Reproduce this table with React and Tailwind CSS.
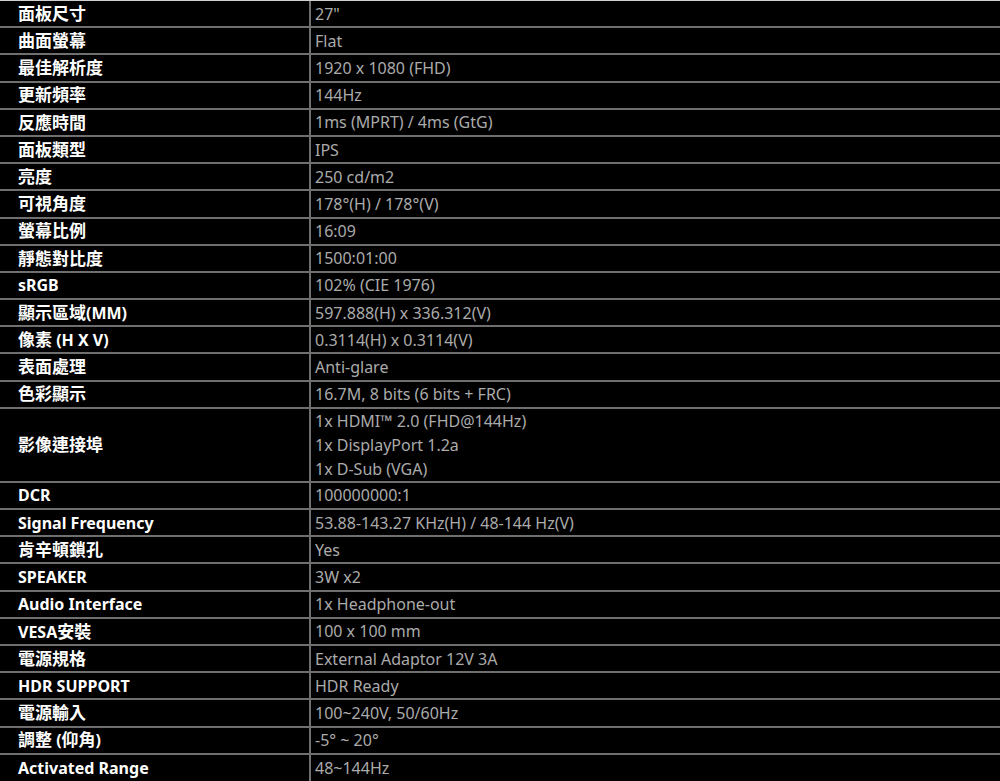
const specs = [
  ['面板尺寸', ['27"']],
  ['曲面螢幕', ['Flat']],
  ['最佳解析度', ['1920 x 1080 (FHD)']],
  ['更新頻率', ['144Hz']],
  ['反應時間', ['1ms (MPRT) / 4ms (GtG)']],
  ['面板類型', ['IPS']],
  ['亮度', ['250 cd/m2']],
  ['可視角度', ['178°(H) / 178°(V)']],
  ['螢幕比例', ['16:09']],
  ['靜態對比度', ['1500:01:00']],
  ['sRGB', ['102% (CIE 1976)']],
  ['顯示區域(MM)', ['597.888(H) x 336.312(V)']],
  ['像素 (H X V)', ['0.3114(H) x 0.3114(V)']],
  ['表面處理', ['Anti-glare']],
  ['色彩顯示', ['16.7M, 8 bits (6 bits + FRC)']],
  ['影像連接埠', ['1x HDMI™ 2.0 (FHD@144Hz)', '1x DisplayPort 1.2a', '1x D-Sub (VGA)']],
  ['DCR', ['100000000:1']],
  ['Signal Frequency', ['53.88-143.27 KHz(H) / 48-144 Hz(V)']],
  ['肯辛頓鎖孔', ['Yes']],
  ['SPEAKER', ['3W x2']],
  ['Audio Interface', ['1x Headphone-out']],
  ['VESA安裝', ['100 x 100 mm']],
  ['電源規格', ['External Adaptor 12V 3A']],
  ['HDR SUPPORT', ['HDR Ready']],
  ['電源輸入', ['100~240V, 50/60Hz']],
  ['調整 (仰角)', ['-5° ~ 20°']],
  ['Activated Range', ['48~144Hz']],
]

// les caractères CJK sont rendus un peu plus grands que le latin
const Label = ({ text }) => (
  <span className="whitespace-pre">
    {text.split(/([\u4e00-\u9fff]+)/).filter(Boolean).map((part, i) =>
      /[\u4e00-\u9fff]/.test(part)
        ? <span key={i} className="text-[17px]">{part}</span>
        : <span key={i}>{part}</span>
    )}
  </span>
)

export default function App() {
  return (
    <div className="min-h-screen bg-black overflow-hidden"
      style={{ fontFamily: '"Noto Sans", "Noto Sans CJK TC", sans-serif' }}>
      <div className="h-px bg-[#d0d0d0]" />
      <div className="grid grid-cols-[311px_1fr] text-[16px]">
        {specs.map(([label, values], i) => {
          const last = i === specs.length - 1
          const h = values.length > 1 ? 'h-[74px]' : 'h-[27.2px]'
          return (
            <div key={label} className="contents">
              <div className={`flex items-center pl-[18px] font-bold text-white border-r-2 border-[#6f6f6f] ${last ? '' : 'border-b-2'} ${h}`}>
                <Label text={label} />
              </div>
              <div className={`flex flex-col justify-center pl-[4px] text-[#ababab] border-[#6f6f6f] ${last ? '' : 'border-b-2'} ${h}`}>
                {values.map(v => (
                  <span key={v} className={values.length > 1 ? 'leading-6' : 'leading-5'}>{v}</span>
                ))}
              </div>
            </div>
          )
        })}
      </div>
    </div>
  )
}
